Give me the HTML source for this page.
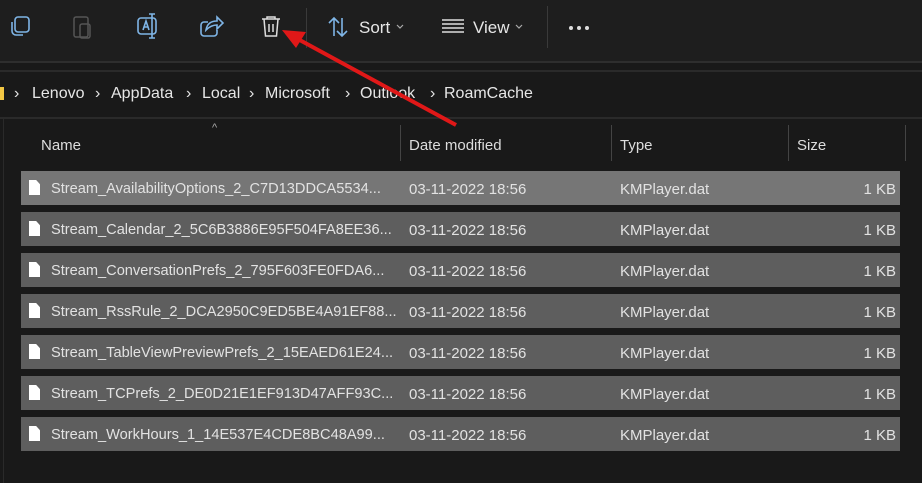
<!DOCTYPE html>
<html><head><style>
body{margin:0;width:922px;height:483px;background:#191919;font-family:"Liberation Sans",sans-serif;color:#e6e6e6;overflow:hidden;position:relative}
.a{position:absolute}
.tb{left:0;top:0;width:922px;height:61px;background:#1e1e1e}
.row{position:absolute;left:21px;width:879px;height:34px;background:#5e5e5e;font-size:15px;line-height:34px;color:#e2e2e2}
.row span{position:absolute;top:2px;white-space:nowrap}
.row span.n{font-size:14.6px;top:1px}
.fi{position:absolute;left:8px;top:9px;width:11px;height:15px;background:#fff;clip-path:polygon(0 0,65% 0,100% 28%,100% 100%,0 100%)}
.hd{font-size:15px;color:#ddd;top:137px}
.sep{width:1px;background:#444}
.bc{position:absolute;top:85px;font-size:16px;white-space:nowrap}
</style></head><body>
<div class="a tb"></div>
<div class="a" style="left:0;top:61px;width:922px;height:2px;background:#2e2e2e"></div>
<div class="a" style="left:0;top:70px;width:922px;height:2px;background:#2a2a2a"></div>
<div class="a" style="left:0;top:117px;width:922px;height:2px;background:#2a2a2a"></div>
<div class="a" style="left:3px;top:119px;width:1px;height:364px;background:#2a2a2a"></div>
<svg class="a" style="left:0;top:0" width="922" height="61">
<g fill="none" stroke="#7fb5e6" stroke-width="1.6">
<rect x="15" y="17" width="14" height="15" rx="3"/><path d="M12 22v9a4 4 0 0 0 4 4h7"/>
</g>
<g fill="none" stroke="#555" stroke-width="1.5"><rect x="74" y="17" width="14" height="20" rx="2"/><rect x="80" y="24" width="10" height="14" rx="2"/></g>
<g fill="none" stroke="#7fb5e6" stroke-width="1.6"><rect x="138" y="18" width="18" height="16" rx="3"/><path d="M143 30l3-9 3 9M144 27h4M152 14v24M149 14h6M149 38h6"/></g>
<g fill="none" stroke="#7fb5e6" stroke-width="1.6"><path d="M208 22h-4a3 3 0 0 0-3 3v8a3 3 0 0 0 3 3h10a3 3 0 0 0 3-3v-3"/><path d="M206 30c1-6 5-9 11-9v-4l6 6-6 6v-4c-5 0-8 2-11 5z"/></g>
<g fill="none" stroke="#ddd" stroke-width="1.5"><path d="M262 19h18M267 19v-2h8v2M264 19l1.5 17h11l1.5-17M269 24v8M273 24v8"/></g>
<rect x="306" y="8" width="1" height="40" fill="#3a3a3a"/>
<g fill="none" stroke="#7fb5e6" stroke-width="1.6"><path d="M334 36V18M329 23l5-5 5 5M342 18v18M337 31l5 5 5-5"/></g>
<path d="M397 25l3 3 3-3" fill="none" stroke="#aaa" stroke-width="1.2"/>
<g stroke="#ddd" stroke-width="1.5"><path d="M442 20h22M442 24h22M442 28h22M442 32h22"/></g>
<path d="M516 25l3 3 3-3" fill="none" stroke="#aaa" stroke-width="1.2"/>
<rect x="547" y="6" width="1" height="42" fill="#3a3a3a"/>
<g fill="#ddd"><circle cx="571" cy="28" r="2"/><circle cx="579" cy="28" r="2"/><circle cx="587" cy="28" r="2"/></g>
</svg>
<div class="a" style="left:359px;top:18px;font-size:17px">Sort</div>
<div class="a" style="left:473px;top:18px;font-size:17px">View</div>
<div class="a" style="left:0;top:87px;width:4px;height:13px;background:#f2c744"></div>
<span class="bc" style="left:14px">›</span><span class="bc" style="left:32px">Lenovo</span>
<span class="bc" style="left:95px">›</span><span class="bc" style="left:111px">AppData</span>
<span class="bc" style="left:186px">›</span><span class="bc" style="left:202px">Local</span>
<span class="bc" style="left:249px">›</span><span class="bc" style="left:265px">Microsoft</span>
<span class="bc" style="left:345px">›</span><span class="bc" style="left:360px">Outlook</span>
<span class="bc" style="left:430px">›</span><span class="bc" style="left:444px">RoamCache</span>
<div class="a" style="left:212px;top:122px;font-size:11px;color:#aaa">^</div>
<div class="a hd" style="left:41px">Name</div>
<div class="a sep" style="left:400px;top:125px;height:36px"></div>
<div class="a hd" style="left:409px">Date modified</div>
<div class="a sep" style="left:611px;top:125px;height:36px"></div>
<div class="a hd" style="left:620px">Type</div>
<div class="a sep" style="left:788px;top:125px;height:36px"></div>
<div class="a hd" style="left:797px">Size</div>
<div class="a sep" style="left:905px;top:125px;height:36px"></div>
<div class="row" style="top:171px;background:#767676"><div class="fi"></div><span class="n" style="left:30px">Stream_AvailabilityOptions_2_C7D13DDCA5534...</span><span style="left:388px">03-11-2022 18:56</span><span style="left:599px">KMPlayer.dat</span><span style="right:4px">1 KB</span></div>
<div class="row" style="top:212px"><div class="fi"></div><span class="n" style="left:30px">Stream_Calendar_2_5C6B3886E95F504FA8EE36...</span><span style="left:388px">03-11-2022 18:56</span><span style="left:599px">KMPlayer.dat</span><span style="right:4px">1 KB</span></div>
<div class="row" style="top:253px"><div class="fi"></div><span class="n" style="left:30px">Stream_ConversationPrefs_2_795F603FE0FDA6...</span><span style="left:388px">03-11-2022 18:56</span><span style="left:599px">KMPlayer.dat</span><span style="right:4px">1 KB</span></div>
<div class="row" style="top:294px"><div class="fi"></div><span class="n" style="left:30px">Stream_RssRule_2_DCA2950C9ED5BE4A91EF88...</span><span style="left:388px">03-11-2022 18:56</span><span style="left:599px">KMPlayer.dat</span><span style="right:4px">1 KB</span></div>
<div class="row" style="top:335px"><div class="fi"></div><span class="n" style="left:30px">Stream_TableViewPreviewPrefs_2_15EAED61E24...</span><span style="left:388px">03-11-2022 18:56</span><span style="left:599px">KMPlayer.dat</span><span style="right:4px">1 KB</span></div>
<div class="row" style="top:376px"><div class="fi"></div><span class="n" style="left:30px">Stream_TCPrefs_2_DE0D21E1EF913D47AFF93C...</span><span style="left:388px">03-11-2022 18:56</span><span style="left:599px">KMPlayer.dat</span><span style="right:4px">1 KB</span></div>
<div class="row" style="top:417px"><div class="fi"></div><span class="n" style="left:30px">Stream_WorkHours_1_14E537E4CDE8BC48A99...</span><span style="left:388px">03-11-2022 18:56</span><span style="left:599px">KMPlayer.dat</span><span style="right:4px">1 KB</span></div>
<svg class="a" style="left:0;top:0" width="922" height="483">
<line x1="456" y1="125" x2="296" y2="38" stroke="#e01818" stroke-width="4"/>
<polygon points="282,30 306,32 296,48" fill="#e01818"/>
</svg>
</body></html>
